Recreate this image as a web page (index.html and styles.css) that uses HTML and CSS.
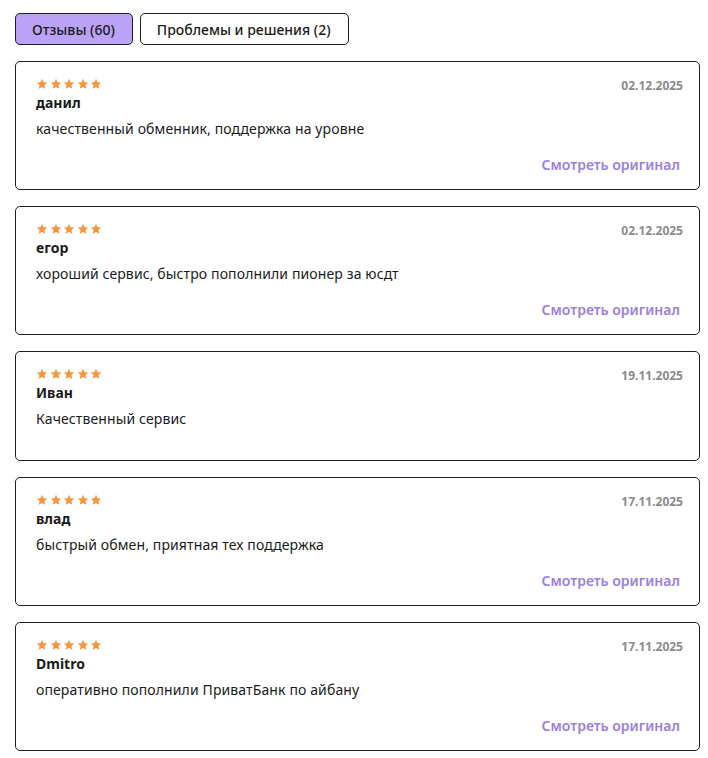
FILE: index.html
```html
<!DOCTYPE html>
<html lang="ru">
<head>
<meta charset="utf-8">
<link rel="stylesheet" href="styles.css">
</head>
<body>
<div class="page">
  <div class="tabs">
    <button class="tab tab-active">Отзывы (60)</button>
    <button class="tab">Проблемы и решения (2)</button>
  </div>
  <div class="list">
    <div class="card">
      <div class="head">
        <div class="stars">
          <svg viewBox="0 0 24 24"><path d="M12 1.5l3.1 7 7.4.7-5.6 5 1.7 7.4L12 17.8l-6.6 3.8 1.7-7.4-5.6-5 7.4-.7z"/></svg>
          <svg viewBox="0 0 24 24"><path d="M12 1.5l3.1 7 7.4.7-5.6 5 1.7 7.4L12 17.8l-6.6 3.8 1.7-7.4-5.6-5 7.4-.7z"/></svg>
          <svg viewBox="0 0 24 24"><path d="M12 1.5l3.1 7 7.4.7-5.6 5 1.7 7.4L12 17.8l-6.6 3.8 1.7-7.4-5.6-5 7.4-.7z"/></svg>
          <svg viewBox="0 0 24 24"><path d="M12 1.5l3.1 7 7.4.7-5.6 5 1.7 7.4L12 17.8l-6.6 3.8 1.7-7.4-5.6-5 7.4-.7z"/></svg>
          <svg viewBox="0 0 24 24"><path d="M12 1.5l3.1 7 7.4.7-5.6 5 1.7 7.4L12 17.8l-6.6 3.8 1.7-7.4-5.6-5 7.4-.7z"/></svg>
        </div>
        <div class="date">02.12.2025</div>
      </div>
      <div class="name">данил</div>
      <div class="text">качественный обменник, поддержка на уровне</div>
      <div class="more"><a class="link" href="#">Смотреть оригинал</a></div>
    </div>
    <div class="card">
      <div class="head">
        <div class="stars">
          <svg viewBox="0 0 24 24"><path d="M12 1.5l3.1 7 7.4.7-5.6 5 1.7 7.4L12 17.8l-6.6 3.8 1.7-7.4-5.6-5 7.4-.7z"/></svg>
          <svg viewBox="0 0 24 24"><path d="M12 1.5l3.1 7 7.4.7-5.6 5 1.7 7.4L12 17.8l-6.6 3.8 1.7-7.4-5.6-5 7.4-.7z"/></svg>
          <svg viewBox="0 0 24 24"><path d="M12 1.5l3.1 7 7.4.7-5.6 5 1.7 7.4L12 17.8l-6.6 3.8 1.7-7.4-5.6-5 7.4-.7z"/></svg>
          <svg viewBox="0 0 24 24"><path d="M12 1.5l3.1 7 7.4.7-5.6 5 1.7 7.4L12 17.8l-6.6 3.8 1.7-7.4-5.6-5 7.4-.7z"/></svg>
          <svg viewBox="0 0 24 24"><path d="M12 1.5l3.1 7 7.4.7-5.6 5 1.7 7.4L12 17.8l-6.6 3.8 1.7-7.4-5.6-5 7.4-.7z"/></svg>
        </div>
        <div class="date">02.12.2025</div>
      </div>
      <div class="name">егор</div>
      <div class="text">хороший сервис, быстро пополнили пионер за юсдт</div>
      <div class="more"><a class="link" href="#">Смотреть оригинал</a></div>
    </div>
    <div class="card">
      <div class="head">
        <div class="stars">
          <svg viewBox="0 0 24 24"><path d="M12 1.5l3.1 7 7.4.7-5.6 5 1.7 7.4L12 17.8l-6.6 3.8 1.7-7.4-5.6-5 7.4-.7z"/></svg>
          <svg viewBox="0 0 24 24"><path d="M12 1.5l3.1 7 7.4.7-5.6 5 1.7 7.4L12 17.8l-6.6 3.8 1.7-7.4-5.6-5 7.4-.7z"/></svg>
          <svg viewBox="0 0 24 24"><path d="M12 1.5l3.1 7 7.4.7-5.6 5 1.7 7.4L12 17.8l-6.6 3.8 1.7-7.4-5.6-5 7.4-.7z"/></svg>
          <svg viewBox="0 0 24 24"><path d="M12 1.5l3.1 7 7.4.7-5.6 5 1.7 7.4L12 17.8l-6.6 3.8 1.7-7.4-5.6-5 7.4-.7z"/></svg>
          <svg viewBox="0 0 24 24"><path d="M12 1.5l3.1 7 7.4.7-5.6 5 1.7 7.4L12 17.8l-6.6 3.8 1.7-7.4-5.6-5 7.4-.7z"/></svg>
        </div>
        <div class="date">19.11.2025</div>
      </div>
      <div class="name">Иван</div>
      <div class="text">Качественный сервис</div>
    </div>
    <div class="card">
      <div class="head">
        <div class="stars">
          <svg viewBox="0 0 24 24"><path d="M12 1.5l3.1 7 7.4.7-5.6 5 1.7 7.4L12 17.8l-6.6 3.8 1.7-7.4-5.6-5 7.4-.7z"/></svg>
          <svg viewBox="0 0 24 24"><path d="M12 1.5l3.1 7 7.4.7-5.6 5 1.7 7.4L12 17.8l-6.6 3.8 1.7-7.4-5.6-5 7.4-.7z"/></svg>
          <svg viewBox="0 0 24 24"><path d="M12 1.5l3.1 7 7.4.7-5.6 5 1.7 7.4L12 17.8l-6.6 3.8 1.7-7.4-5.6-5 7.4-.7z"/></svg>
          <svg viewBox="0 0 24 24"><path d="M12 1.5l3.1 7 7.4.7-5.6 5 1.7 7.4L12 17.8l-6.6 3.8 1.7-7.4-5.6-5 7.4-.7z"/></svg>
          <svg viewBox="0 0 24 24"><path d="M12 1.5l3.1 7 7.4.7-5.6 5 1.7 7.4L12 17.8l-6.6 3.8 1.7-7.4-5.6-5 7.4-.7z"/></svg>
        </div>
        <div class="date">17.11.2025</div>
      </div>
      <div class="name">влад</div>
      <div class="text">быстрый обмен, приятная тех поддержка</div>
      <div class="more"><a class="link" href="#">Смотреть оригинал</a></div>
    </div>
    <div class="card">
      <div class="head">
        <div class="stars">
          <svg viewBox="0 0 24 24"><path d="M12 1.5l3.1 7 7.4.7-5.6 5 1.7 7.4L12 17.8l-6.6 3.8 1.7-7.4-5.6-5 7.4-.7z"/></svg>
          <svg viewBox="0 0 24 24"><path d="M12 1.5l3.1 7 7.4.7-5.6 5 1.7 7.4L12 17.8l-6.6 3.8 1.7-7.4-5.6-5 7.4-.7z"/></svg>
          <svg viewBox="0 0 24 24"><path d="M12 1.5l3.1 7 7.4.7-5.6 5 1.7 7.4L12 17.8l-6.6 3.8 1.7-7.4-5.6-5 7.4-.7z"/></svg>
          <svg viewBox="0 0 24 24"><path d="M12 1.5l3.1 7 7.4.7-5.6 5 1.7 7.4L12 17.8l-6.6 3.8 1.7-7.4-5.6-5 7.4-.7z"/></svg>
          <svg viewBox="0 0 24 24"><path d="M12 1.5l3.1 7 7.4.7-5.6 5 1.7 7.4L12 17.8l-6.6 3.8 1.7-7.4-5.6-5 7.4-.7z"/></svg>
        </div>
        <div class="date">17.11.2025</div>
      </div>
      <div class="name">Dmitro</div>
      <div class="text">оперативно пополнили ПриватБанк по айбану</div>
      <div class="more"><a class="link" href="#">Смотреть оригинал</a></div>
    </div>
  </div>
</div>
</body>
</html>
```

FILE: styles.css
```css
* { box-sizing: border-box; }
html, body { margin: 0; padding: 0; background: #fff; }
body {
  font-family: "Noto Sans", "Open Sans", sans-serif;
  color: #1b1b1b;
}
.page {
  padding: 13px 8px 0 15px;
}
.tabs {
  display: flex;
  gap: 7px;
  margin-bottom: 16px;
}
.tab {
  height: 32px;
  padding: 0 17px 0 16px;
  border: 1px solid #1e1e1e;
  border-radius: 5px;
  background: #fff;
  font-family: inherit;
  font-size: 14px;
  font-weight: 500;
  color: #1b1b1b;
  cursor: pointer;
}
.tab-active {
  background: #baa2f6;
}
.list {
  display: flex;
  flex-direction: column;
  gap: 16px;
}
.card {
  border: 1px solid #1e1e1e;
  border-radius: 5px;
  padding: 16px 16px 15px 20px;
}
.head {
  display: flex;
  justify-content: space-between;
  align-items: flex-start;
  height: 16px;
}
.stars {
  display: flex;
  gap: 1.5px;
}
.stars svg {
  width: 12px;
  height: 12px;
  fill: #f5953d;
}
.date {
  font-size: 12px;
  line-height: 16px;
  font-weight: 700;
  color: #8b8b8b;
}
.name {
  font-size: 14px;
  line-height: 18px;
  font-weight: 700;
}
.text {
  margin-top: 8px;
  font-size: 14px;
  line-height: 18px;
  letter-spacing: 0.12px;
  margin-bottom: 17px;
}
.more {
  display: flex;
  justify-content: flex-end;
  padding-right: 3px;
  padding-top: 1px;
}
.link {
  font-size: 14px;
  line-height: 18px;
  font-weight: 600;
  color: #9b7fe0;
  text-decoration: none;
}
```
